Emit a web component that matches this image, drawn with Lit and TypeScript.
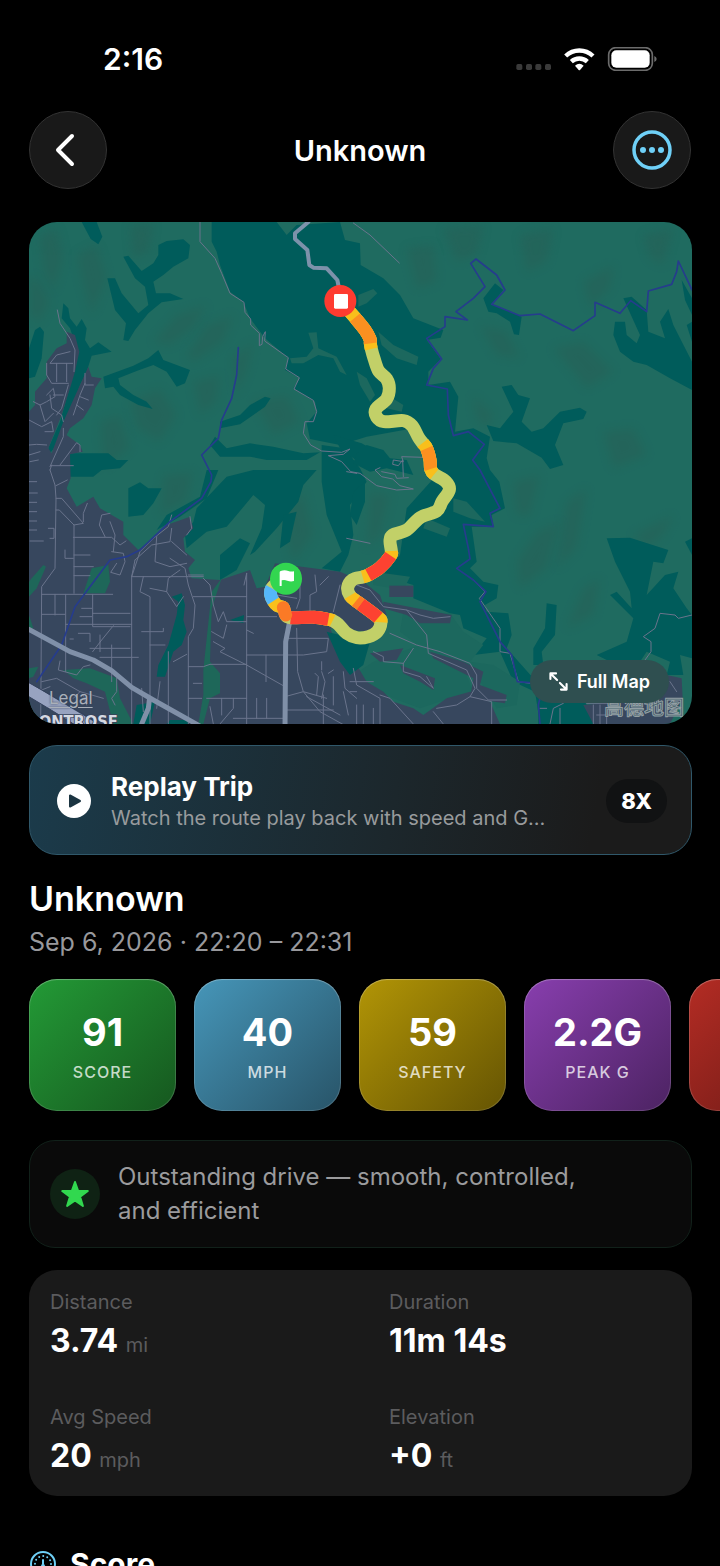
import { LitElement, html, svg, css } from "lit";
import { customElement, property } from "lit/decorators.js";

/* Terrain and street data share one drawing space, three units per point. */
const SHADE = [
  "M60 60 110 40 130 130 100 230 70 170Z",
  "M27 180 60 200 90 260 60 320 27 300Z",
  "M170 120 230 90 260 190 215 300 190 210Z",
  "M330 30 400 25 385 110 340 130Z",
  "M470 300 560 270 520 340 450 390 400 380Z",
  "M560 330 640 300 610 380 520 440 500 420Z",
  "M640 430 700 380 680 470 650 540Z",
  "M330 560 420 520 470 600 420 680 350 640Z",
  "M240 620 300 600 330 700 250 760Z",
  "M520 500 600 480 590 560 540 600Z",
  "M700 560 800 540 840 620 760 660Z",
  "M430 780 520 770 500 860 420 900Z",
  "M780 900 850 830 880 960 820 1040Z",
  "M1050 830 1110 840 1080 960 1040 1000Z",
  "M1270 40 1390 30 1370 120 1310 140Z",
  "M1160 100 1240 90 1250 200 1190 220Z",
  "M1500 60 1600 40 1580 140 1520 170Z",
  "M1690 200 1780 150 1770 220 1710 280Z",
  "M1870 60 1960 40 1930 150 1890 130Z",
  "M1380 330 1460 350 1500 430 1430 420Z",
  "M1600 400 1690 380 1780 470 1700 520Z",
  "M1750 650 1840 640 1880 720 1780 760Z",
  "M1360 540 1420 600 1400 640 1370 610Z",
  "M1550 950 1620 920 1580 1060 1500 1120 1490 1040Z",
  "M1640 860 1700 820 1670 1000 1610 1060Z",
  "M1840 960 1960 900 1930 960 1880 1000Z",
  "M1480 800 1560 780 1530 900 1490 900Z",
  "M1690 1120 1740 1090 1720 1200 1640 1240Z",
];

const FOREST = [
  "M575 21H770L800 60 830 30 960 21 975 75 1020 85 1022 150 1090 190 1140 240 1180 310 1270 345 1262 368 1220 375 1262 432 1225 470 1225 510 1290 500 1315 545 1305 650 1360 640 1410 665 1400 730 1410 765 1438 800 1455 880 1415 900 1420 935 1355 935 1370 1040 1350 1060 1390 1100 1435 1110 1430 1150 1395 1170 1400 1190 1465 1195 1475 1260 1460 1300 1500 1345 1540 1390 1640 1470 1700 1527H1560L1545 1430 1480 1400 1440 1310 1360 1320 1400 1270 1330 1240 1320 1200 1290 1195 1180 1150 1180 1110 1080 1080 1140 1020 1160 880 1250 780 1180 640 1040 665 960 690 870 672 860 625 890 590 885 560 820 520 840 490 795 465 805 430 735 370 690 310 670 260 630 230 600 150 590 110 575 80Z",
  "M185 21 230 21 247 65 235 88 212 72Z",
  "M415 90 440 78 490 73 510 90 505 130 460 155 430 180 400 200 408 235 450 235 490 252 425 262 385 295 345 345 325 378 310 375 318 325 285 285 262 190 285 190 305 235 355 295 385 270 375 215 345 190 310 125 325 122 365 168 400 145 415 120Z",
  "M45 345 60 335 72 350 65 430 45 485 27 490V400Z",
  "M130 265 145 280 150 310 170 335 185 312 200 340 195 375 210 400 235 382 275 410 215 422 200 470 180 510 160 570 110 690 90 715 85 700 120 620 140 550 162 470 170 400 150 340 125 310Z",
  "M250 485 340 452 385 430 415 405 430 435 510 465 495 505 470 515 440 470 400 450 350 468 295 490 300 510 340 540 380 560 398 582 355 570 300 540 280 515 255 520Z",
  "M600 620 660 600 690 570 735 545 752 550 735 575 700 600 660 628 600 640Z",
  "M570 690 585 665 620 700 690 685 760 695 850 715 900 712 860 735 740 735 690 725 600 725Z",
  "M150 715 265 715 290 735 325 735 300 760 245 765 220 785 150 785Z",
  "M325 820 360 802 385 820 425 820 400 865 370 900 325 905Z",
  "M560 765H595L560 850 480 905 410 945 440 900 540 845Z",
  "M620 785 700 765H890L850 810 835 860 770 940 705 1010 690 1020 725 940 735 870 700 840 650 900 620 935 560 950 500 1000 495 960 520 920 530 880Z",
  "M905 690 975 700 1020 760 1040 800 990 870 1000 960 985 1020 960 1070 905 1060 965 1010 920 900 905 800Z",
  "M600 1020 660 970 690 985 650 1065 600 1095Z",
  "M790 900 830 890 810 980 780 1000Z",
  "M940 660 1025 685 1070 710 1045 760 985 720 960 700Z",
  "M1010 715 1040 690 1090 705 1110 730 1160 735 1180 780 1100 760 1050 770 1000 745Z",
  "M1000 830 1035 800 1035 860 1010 930 990 900Z",
  "M1390 250 1425 205 1450 225 1415 268 1470 290 1505 305 1497 360 1482 358 1470 320 1430 295 1405 290Z",
  "M1810 250 1835 245 1880 285 1885 350 1935 370 1920 320 1945 282 1960 330 2016 440V525L1950 490 1880 450 1840 440 1800 410 1780 360 1785 320 1815 320 1820 360 1850 385 1860 360Z",
  "M1985 195 2016 250V300L1995 255Z",
  "M2000 330 2016 320V380Z",
  "M1445 515 1475 510 1495 540 1530 550 1505 620 1535 650 1570 640 1620 590 1680 578 1700 590 1690 612 1630 625 1605 690 1630 750 1590 762 1565 728 1490 685 1420 678 1400 630 1440 640 1480 590Z",
  "M1760 970 1830 968 1945 1005 1930 1045 1900 1040 1880 1140 1935 1080 1975 1070 1960 1120 2000 1180 2016 1200V1330L1980 1320 1990 1380 1940 1380 1950 1340 1880 1310 1860 1340 1780 1345 1730 1320 1820 1280 1840 1210 1770 1140 1790 1130 1835 1180 1830 1130 1785 1040Z",
  "M1580 1165 1610 1170 1605 1260 1565 1310 1570 1350 1540 1350 1540 1300 1575 1240Z",
  "M1555 1460 1690 1455 1740 1527H1555Z",
  "M2016 970 1995 980 2016 1020Z",
];

const MEADOW = [
  "M865 353 890 352 895 400 950 425 980 480 960 470 940 430 895 420 850 445 815 445 810 430 860 425 880 400Z",
  "M1015 240 1060 222 1072 235 1040 265 1015 275Z",
  "M1075 350 1120 390 1195 425 1190 450 1130 430 1085 390Z",
  "M1010 470 1040 490 1065 540 1050 560 1020 510Z",
  "M1110 545 1150 570 1145 590 1100 580Z",
  "M1300 850 1340 860 1395 920 1350 910 1300 890Z",
  "M1220 910 1290 940 1280 965 1210 940Z",
  "M1150 1190 1290 1195 1330 1250 1390 1290 1350 1340 1420 1350 1500 1400 1490 1470 1430 1480 1370 1380 1220 1310 1140 1250Z",
  "M1000 1380 1060 1340 1200 1290 1330 1360 1360 1430 1290 1450 1200 1480 1120 1450 1070 1420Z",
  "M1060 1070 1170 1085 1150 1125 1060 1110Z",
];

const CITY = [
  "M27 590 45 570 45 530 80 490 80 440 110 400 140 385 140 350 165 360 178 410 165 470 150 520 125 600 85 700 95 715 130 620 180 510 205 455 215 485 245 490 225 520 215 570 190 610 150 640 140 660 180 690 188 710 150 718 152 790 140 820 170 875 220 845 240 880 310 920 310 960 355 1005 400 970 440 930 510 905 520 940 490 970 495 1010 525 1035 505 1060 515 1090 600 1095 690 1065 710 1120 735 1115 765 1045 960 1070 1030 1100 1080 1140 1100 1200 1050 1250 930 1240 960 1310 990 1370 1010 1350 1040 1400 1090 1430 1120 1460 1180 1480 1210 1500 1280 1450 1350 1430 1410 1460 1440 1527H27Z",
  "M1108 1112H1180V1146H1108Z",
  "M1090 1160 1190 1180 1295 1200 1290 1225 1200 1225 1160 1200 1090 1180Z",
  "M1050 1315 1150 1300 1130 1335 1080 1340Z",
  "M1140 1350 1245 1390 1240 1425 1200 1400 1150 1375Z",
  "M1230 1310 1330 1340 1390 1370 1380 1410 1460 1440 1455 1465 1350 1450 1360 1390 1240 1330Z",
  "M1690 1470 1790 1460 1940 1380 1985 1390 1988 1450 1950 1527H1720Z",
];

const PARK = [
  "M35 1090 70 1050 78 1055 50 1120 27 1145V1100Z",
  "M215 1060 265 1050 270 1100 255 1135 190 1135Z",
  "M130 1365 210 1360 290 1390 300 1450 340 1527H280L255 1430 200 1405 160 1390Z",
  "M27 1360 55 1355 40 1385 27 1390Z",
  "M27 1200 40 1240H27Z",
  "M575 1130 605 1090 595 1120 575 1180 570 1340 600 1375 600 1435 570 1450 550 1527H535L550 1440 550 1365Z",
];

const LAKE = [
  "M455 1145 485 1135 495 1170 490 1215 500 1250 485 1290 460 1310 435 1385 410 1385 415 1350 445 1290 470 1200 475 1160Z",
  "M630 1215 672 1200 670 1225Z",
  "M350 1470 405 1460 390 1527H340Z",
  "M920 1250 1000 1270 1050 1280 1030 1350 990 1380 960 1340Z",
  "M450 1515 510 1515 505 1527H440Z",
];

const MINOR = [
  "M540 21 540 80 585 130 605 175 630 235 672 262 675 292 692 312 692 330 718 355 718 392 726 388 728 365 736 350 734 378 805 428 797 462 838 488 822 522 880 556 890 590 880 620 855 620 850 655 872 690 905 708 965 712 990 702 970 718 925 722 965 740 992 770 1020 775 1070 812 1130 825 1180 822 1140 812 1118 792 1085 785 1065 765 1080 758",
  "M1210 727 1145 725 1150 740 1120 735 1118 748 1135 752 1148 735 1150 785",
  "M1085 770 1125 778 1130 790 1165 788",
  "M1000 24 1050 60 1138 144",
  "M112 285 120 325 150 370 165 405 162 470",
  "M150 410 110 420 90 445H158M80 445V480L95 505H145M110 445V500M140 445V500M145 510 125 580 110 600M80 540 100 520 105 545 80 560 60 570 40 560M60 570 75 620 100 595M100 540H130M90 540 95 580 125 600 130 620M27 615 65 635 95 620 100 650 75 650",
  "M195 475 195 510 220 510M195 505 180 540 160 600M180 545 205 555M170 570 190 585",
  "M27 690 50 688 80 690M27 720 60 710M30 740 55 735M90 755 130 665 130 640M95 750 90 765M120 750 170 683 180 690 180 710M95 752H160",
  "M90 765 105 810 108 850 105 1060 65 1115 62 1527",
  "M108 850 125 850 190 925 162 930 118 885 108 885M190 920 190 895 202 865M162 930V1135M108 812 142 795",
  "M27 800H50M27 834H52M27 862H50M27 890H50M27 918H50M27 945H50M30 978H70M85 940H102V970H90M135 1005V1030H160M160 967H275L300 990 318 978M162 1020H210M162 1055H220M162 1082H210M270 895 245 900 238 930 255 965M270 920 285 960 280 1010",
  "M275 1010 310 1015 315 1040 300 1080 272 1072 290 1045",
  "M65 1138H278M65 1198H135M137 1138V1370M105 1138V1200M218 1138V1235H330M218 1195H330M137 1228H335M150 1272H160M218 1310 245 1275 280 1232",
  "M210 1300H330M240 1327H355M275 1290V1400M185 1180H215M180 1205H215M175 1255H210V1280M240 1260V1310",
  "M335 1527V1085L360 1010 400 970 445 935 455 900",
  "M345 1035 395 990 450 980 455 940M410 965 405 1040 450 1055 500 1045M450 1030 495 1060 505 1110 525 1170 520 1240 505 1265V1527",
  "M335 1085H505 550M370 1085 360 1130 390 1145V1527M480 1065 445 1090 440 1130 470 1175 490 1145M345 1035 335 1085M455 980 500 1020M510 905 515 940 500 960",
  "M390 1120 440 1130M365 1250H430V1240M390 1290H435M505 1080H550M520 1145H680M365 1420 370 1490M420 1400 410 1480M445 1310V1527M460 1340 500 1318M505 1355H550L570 1348H680",
  "M680 1075V1527M680 1075 672 1110M550 1090 570 1110 580 1170 595 1220 610 1190 620 1220H680M575 1250 610 1270 620 1230M580 1280 615 1300 600 1310 680 1350",
  "M680 1205H770M680 1245 700 1255M680 1320H795M738 1320V1400M680 1350 795 1415M830 1240 833 1370 850 1430 900 1490 990 1540",
  "M795 1320H850L920 1310 925 1270 900 1270H795M885 1375 895 1385 890 1440M905 1370 915 1400 905 1450M905 1340V1365M925 1375 940 1365M795 1485H940M795 1445 850 1430 920 1450M970 1430 985 1500",
  "M910 1440V1527M940 1385V1470M860 1445 960 1500M970 1370 975 1420 1010 1450M505 1450H545M560 1450H680M520 1405H545M605 1450V1500M570 1475 580 1527M600 1527 640 1480V1450M640 1510H795M710 1510V1450M740 1450V1510",
  "M120 1338 115 1365 170 1380 190 1355 210 1350M65 1400 110 1390 180 1430 160 1450M65 1425 90 1415M290 1390 290 1430 275 1450 285 1470M180 1430 250 1450M190 1440 200 1470",
  "M840 1080V1150L830 1180M885 1080 890 1130 870 1140 870 1190M925 1085 900 1110M960 1110 940 1190M770 1140 830 1150",
  "M1010 1110 1050 1125 1090 1175 1160 1185 1220 1260 1225 1315 1340 1365 1365 1420 1350 1445 1415 1460 1415 1527",
  "M1110 1255 1190 1290 1260 1310 1350 1345 1370 1380 1370 1420 1405 1455H1460M1160 1185 1200 1200 1240 1210 1290 1205",
  "M1060 1310 1090 1325 1090 1340 1150 1345 1180 1300M1150 1345 1150 1370 1200 1385 1240 1420 1220 1385",
  "M1360 1095 1395 1130 1378 1150 1440 1240 1440 1310 1470 1315 1495 1400 1530 1405",
  "M2016 1200 1975 1210 1965 1200 1920 1195 1905 1240 1870 1265 1893 1280V1310L1875 1335",
  "M1000 1360 1010 1410 1080 1450 1080 1527M1080 1440 1110 1450 1180 1527M990 1400 1060 1400M990 1430 1010 1430M1030 1470V1527M1010 1470V1527M1060 1480V1527M1240 1490 1270 1527M1250 1480 1310 1470 1350 1445M980 970 1050 985M980 770 1010 775",
  "M1560 1480 1580 1480M1590 1527 1600 1480 1630 1465M1620 1480V1527M1720 1470V1527M1740 1470V1527M1700 1465H1780M1950 1400 1970 1430M1760 1490V1527M1730 1500H1790",
];

const RIVER = [
  "M655 398 650 480 635 550 605 615 595 670 545 720 575 780 573 800 545 850 450 920 360 1005 320 1025 270 1035 165 1175 125 1290 50 1400",
  "M2016 225 1975 138 1970 170 1955 208 1885 228 1880 290 1832 257 1800 295 1725 262V302L1660 347 1560 297 1500 302 1415 268 1455 225 1430 180 1368 132 1352 145 1395 215 1360 250 1308 290 1342 315 1275 305V335L1220 370 1265 432 1240 460 1220 510 1282 522 1285 600 1300 662 1345 650 1393 688 1358 735 1380 765 1440 880 1410 895 1420 935 1330 928 1345 1000 1350 1032 1310 1060 1360 1095 1398 1130 1380 1160 1440 1280 1475 1320 1492 1400 1555 1405 1565 1430 1555 1470 1560 1527",
];

const MAJOR = [
  "M865 21 825 55 825 72 862 105 868 150 880 158 920 160 952 195 955 210",
];

const FREEWAY = [
  "M27 1243 150 1310 220 1335 275 1367 335 1417 400 1455 520 1522 560 1545",
  "M808 1225 797 1280 795 1540",
  "M388 1455 385 1480 365 1527",
];

/* Recorded positions of the drive, from its end back to its start. */
const TRACK: [number, number][] = [
  [961, 258], [985, 285], [1005, 308], [1035, 345], [1050, 372],
  [1051, 385], [1054, 402], [1062, 430], [1076, 468], [1100, 492],
  [1108, 520], [1100, 552], [1068, 582], [1070, 606], [1092, 620],
  [1150, 617], [1176, 632], [1196, 668], [1208, 684], [1220, 700],
  [1230, 735], [1232, 762], [1243, 778], [1278, 800], [1288, 825],
  [1266, 860], [1250, 888], [1200, 908], [1160, 945], [1118, 960],
  [1110, 978], [1114, 1008], [1112, 1022], [1080, 1058], [1045, 1080],
  [1028, 1086], [998, 1094], [983, 1118], [990, 1142], [1008, 1158],
  [1022, 1168], [1075, 1208], [1083, 1222], [1072, 1250], [1045, 1265],
  [1010, 1268], [980, 1255], [955, 1228], [938, 1217], [925, 1213],
  [880, 1207], [812, 1208], [797, 1200], [790, 1178], [772, 1172],
  [760, 1158], [752, 1140], [755, 1120], [775, 1100],
];

const SPANS: { from: number; to: number; tone: string }[] = [
  { from: 1, to: 6, tone: "gold" },
  { from: 2, to: 5, tone: "orange" },
  { from: 18, to: 22, tone: "gold" },
  { from: 19, to: 21, tone: "orange" },
  { from: 31, to: 35, tone: "gold" },
  { from: 32, to: 34, tone: "red" },
  { from: 38, to: 42, tone: "gold" },
  { from: 39, to: 40, tone: "deep" },
  { from: 40, to: 41, tone: "red" },
  { from: 48, to: 50, tone: "gold" },
  { from: 49, to: 51, tone: "red" },
  { from: 53, to: 55, tone: "gold" },
  { from: 55, to: 57, tone: "blue" },
];

function curve(from: number, to: number): string {
  const at = (i: number) => TRACK[Math.max(0, Math.min(TRACK.length - 1, i))];
  let d = `M${at(from).join(" ")}`;
  for (let i = from; i < to; i++) {
    const [a, b, c, e] = [at(i - 1), at(i), at(i + 1), at(i + 2)];
    const first = [b[0] + (c[0] - a[0]) / 6, b[1] + (c[1] - a[1]) / 6];
    const second = [c[0] - (e[0] - b[0]) / 6, c[1] - (e[1] - b[1]) / 6];
    d += `C${first.join(" ")} ${second.join(" ")} ${c.join(" ")}`;
  }
  return d;
}

@customElement("trip-map")
class TripMap extends LitElement {
  static styles = css`
    :host {
      display: block;
      position: relative;
      overflow: hidden;
      aspect-ratio: 663 / 502;
      border-radius: 28px;
      background: #1f6b60;
    }
    .canvas {
      display: block;
      width: 100%;
      height: 100%;
    }
    .shade { fill: #2a5c53; opacity: 0.4; filter: blur(14px); }
    .forest { fill: #005c5b; }
    .meadow { fill: #1c685e; }
    .city { fill: #37475e; }
    .park { fill: #1e6759; }
    .line { fill: none; stroke-linejoin: round; stroke-linecap: round; }
    .minor { stroke: #6a748c; stroke-width: 3; }
    .river { stroke: #263c8d; stroke-width: 5; }
    .major { stroke: #7d92ab; stroke-width: 12; }
    .freeway { stroke: #8090a8; stroke-width: 15; }
    .interstate { stroke: #98a3c0; stroke-width: 36; }
    .casing { stroke: #34415c; stroke-width: 3; }
    .route { stroke: #c2d068; stroke-width: 39; }
    .seg { stroke-linecap: butt; }
    .gold { stroke: #f9bf1b; }
    .orange { stroke: #fb9020; }
    .deep { stroke: #fb7a26; }
    .red { stroke: #fd4231; }
    .blue { stroke: #55b7fa; }
    .town {
      font: 700 49px "Liberation Sans Narrow", "DejaVu Sans Condensed", sans-serif;
      fill: #d5d9e2;
      stroke: #37435a;
      stroke-width: 5;
      paint-order: stroke;
    }
    .legal {
      position: absolute;
      left: 20px;
      bottom: 16px;
      font-size: 17px;
      line-height: 20px;
      color: #a9b0ba;
      text-shadow: 0 0 2px #37435a;
      text-underline-offset: 3px;
    }
    .mark {
      position: absolute;
      right: 8px;
      bottom: 5px;
      font: 500 20px/24px "Noto Sans CJK SC", sans-serif;
      color: #3c5560;
      -webkit-text-stroke: 1px #93a0a5;
    }
    .full {
      position: absolute;
      right: 23px;
      bottom: 21px;
      display: flex;
      align-items: center;
      gap: 9px;
      height: 43px;
      padding: 0 19px;
      border: 0;
      border-radius: 22px;
      background: #2f4f50;
      color: #fff;
      font: 600 18px/24px Inter, sans-serif;
    }
    .arrows { width: 19px; height: 19px; }
  `;

  private lines(kind: string, list: string[]) {
    return list.map((d) => svg`<path class="line ${kind}" d=${d} />`);
  }

  private areas(kind: string, list: string[]) {
    return list.map((d) => svg`<path class=${kind} d=${d} />`);
  }

  render() {
    return html`
      <svg class="canvas" viewBox="27 21 1989 1506" preserveAspectRatio="xMidYMid slice" role="img" aria-label="Trip route">
        ${this.areas("shade", SHADE)}
        ${this.areas("forest", FOREST)}
        ${this.areas("meadow", MEADOW)}
        ${this.areas("city", CITY)}
        ${this.areas("park", PARK)}
        ${this.areas("forest", LAKE)}
        ${this.lines("minor", MINOR)}
        ${this.lines("river", RIVER)}
        ${this.lines("major", MAJOR)}
        ${this.lines("freeway", FREEWAY)}
        <path class="line interstate" d="M0 1408 100 1468 230 1546" />
        <path class="line casing" d="M0 1388 110 1450 250 1532M0 1429 100 1489 180 1540" />
        <text class="town" x="56" y="1536">ONTROSE</text>

        <path class="line route" d=${curve(0, TRACK.length - 1)} />
        ${SPANS.map((s) => svg`<path class="line route seg ${s.tone}" d=${curve(s.from, s.to)} />`)}
        <path class="line route deep" d=${curve(52, 53)} />

        <circle cx="961" cy="258" r="48" fill="#fe3b30" />
        <rect x="942" y="237" width="42" height="44" rx="4" fill="#fff" />
        <circle cx="798" cy="1091" r="48" fill="#32d650" />
        <path fill="#fff" d="M779 1072q0-3 3-4 12-5 23 0 8 3 17 1v29q-10 3-20-1-8-3-17-1v17h-6z" />
      </svg>
      <a class="legal" href="#legal">Legal</a>
      <span class="mark" lang="zh">高德地图</span>
      <button class="full" type="button">
        <svg class="arrows" viewBox="0 0 54 54" fill="none" stroke="#fff" stroke-width="6" stroke-linecap="round" stroke-linejoin="round" aria-hidden="true">
          <path d="M4 20V4h16M5 5l18 18M50 34v16H34M49 49 31 31" />
        </svg>
        Full Map
      </button>
    `;
  }
}

@customElement("metric-tile")
class MetricTile extends LitElement {
  @property() value = "";
  @property() label = "";
  @property({ reflect: true }) tone = "";

  static styles = css`
    :host {
      box-sizing: border-box;
      flex: 0 0 147px;
      height: 132px;
      display: flex;
      flex-direction: column;
      align-items: center;
      justify-content: center;
      gap: 7px;
      border-radius: 28px;
      box-shadow: inset 0 0 0 1px #ffffff26, inset 0 1px 1px #ffffff30;
      color: #fff;
    }
    :host([tone="green"]) { background: linear-gradient(135deg, #239a36, #16571f); }
    :host([tone="blue"]) { background: linear-gradient(135deg, #4696b9, #285468); }
    :host([tone="yellow"]) { background: linear-gradient(135deg, #b29506, #655403); }
    :host([tone="purple"]) { background: linear-gradient(135deg, #883eae, #4c2362); }
    :host([tone="red"]) { background: linear-gradient(135deg, #b42c24, #651814); }
    .value { font-size: 38px; line-height: 46px; font-weight: 700; }
    .label {
      font-size: 16px;
      line-height: 20px;
      font-weight: 500;
      letter-spacing: 1px;
      color: #ffffffbf;
    }
  `;

  render() {
    return html`<span class="value">${this.value}</span><span class="label">${this.label}</span>`;
  }
}

@customElement("app-root")
class AppRoot extends LitElement {
  static styles = css`
    :host {
      display: block;
      box-sizing: border-box;
      height: 100vh;
      overflow: hidden auto;
      scrollbar-width: none;
      background: #000;
      color: #fff;
      font-family: Inter, sans-serif;
    }
    h1, h2, p, dl, dd { margin: 0; }
    .status {
      display: flex;
      align-items: center;
      justify-content: space-between;
      height: 36px;
      padding: 41px 63px 0 103px;
      font-size: 30px;
      line-height: 36px;
      font-weight: 600;
    }
    .signals { display: block; width: 141px; height: 24px; }
    .bar {
      display: grid;
      grid-template-columns: 78px 1fr 78px;
      align-items: center;
      padding: 34px 29px 33px;
      text-align: center;
    }
    .bar-title { padding-top: 2px; font-size: 29px; line-height: 36px; font-weight: 600; }
    .round {
      display: grid;
      place-items: center;
      width: 78px;
      height: 78px;
      padding: 0;
      border: 1px solid #333;
      border-radius: 50%;
      background: #191919;
    }
    .chevron { width: 24px; height: 36px; margin-right: 6px; }
    .more { width: 40px; height: 40px; }
    .content {
      display: flex;
      flex-direction: column;
      padding: 0 28px 0 29px;
    }
    .replay {
      display: flex;
      align-items: center;
      gap: 20px;
      height: 110px;
      margin-top: 21px;
      padding: 2px 24px 0 27px;
      border: 1px solid #30586a;
      border-radius: 28px;
      background: linear-gradient(100deg, #1b3b4b, #1c272c 55%, #1b1b1b 85%);
      color: #fff;
      font-family: inherit;
      text-align: left;
    }
    .play { flex: none; width: 34px; height: 34px; }
    .replay-text { flex: 1; min-width: 0; display: flex; flex-direction: column; }
    .replay-title { font-size: 26px; line-height: 34px; font-weight: 700; }
    .replay-sub { font-size: 20px; line-height: 28px; color: #989b9d; white-space: nowrap; }
    .rate {
      padding: 8px 15px;
      border-radius: 22px;
      background: #111213;
      font-size: 22px;
      line-height: 28px;
      font-weight: 800;
    }
    .place { margin-top: 22px; font-size: 34px; line-height: 44px; font-weight: 600; }
    .when { margin-top: 5px; font-size: 25px; line-height: 32px; color: #98989c; }
    .tiles { display: flex; gap: 18px; margin: 21px -28px 0 0; overflow: hidden; }
    .note {
      display: flex;
      align-items: center;
      gap: 18px;
      margin-top: 29px;
      padding: 19px 100px 19px 20px;
      border: 1px solid #11211a;
      border-radius: 26px;
      background: #0a0a0a;
      color: #9b9b9d;
      font-size: 24px;
      line-height: 34px;
    }
    .badge { flex: none; width: 50px; height: 50px; }
    .facts {
      display: grid;
      grid-template-columns: 1fr 1fr;
      gap: 41px 57px;
      margin-top: 22px;
      padding: 18px 21px 19px;
      border-radius: 28px;
      background: #1a1a1a;
    }
    .fact-name { font-size: 20px; line-height: 28px; color: #5c5c5e; }
    .fact-value { margin-top: 4px; font-size: 32px; line-height: 42px; font-weight: 700; }
    .unit { font-size: 20px; line-height: 20px; font-weight: 400; color: #5c5c5e; }
    .score {
      display: flex;
      align-items: center;
      gap: 13px;
      margin-top: 46px;
      padding-bottom: 40px;
      font-size: 30px;
      line-height: 44px;
      font-weight: 700;
    }
    .gauge { width: 28px; height: 28px; }
  `;

  private tiles = [
    { value: "91", label: "SCORE", tone: "green" },
    { value: "40", label: "MPH", tone: "blue" },
    { value: "59", label: "SAFETY", tone: "yellow" },
    { value: "2.2G", label: "PEAK G", tone: "purple" },
    { value: "", label: "", tone: "red" },
  ];

  private facts = [
    { name: "Distance", value: "3.74", unit: "mi" },
    { name: "Duration", value: "11m 14s", unit: "" },
    { name: "Avg Speed", value: "20", unit: "mph" },
    { name: "Elevation", value: "+0", unit: "ft" },
  ];

  render() {
    return html`
      <div class="status">
        <span>2:16</span>
        <svg class="signals" viewBox="50 48 423 72" aria-hidden="true">
          <g fill="#3a3a3a">
            <rect x="51" y="99" width="18" height="18" rx="5" />
            <rect x="80" y="99" width="18" height="18" rx="5" />
            <rect x="108" y="99" width="18" height="18" rx="5" />
            <rect x="137" y="99" width="18" height="18" rx="5" />
          </g>
          <g fill="none" stroke="#fff" stroke-width="13">
            <path d="M199 75a59 59 0 0 1 82 0" />
            <path d="M216 92a35 35 0 0 1 48 0" />
          </g>
          <path fill="#fff" d="M227 104q13-12 26 0l-11 13q-2 2-4 0z" />
          <rect x="328" y="50" width="131" height="68" rx="21" fill="none" stroke="#6c6c6c" stroke-width="5" />
          <rect x="336" y="58" width="115" height="52" rx="15" fill="#fff" />
          <path fill="#6c6c6c" d="M465 75q7 3 7 9t-7 9z" />
        </svg>
      </div>

      <header class="bar">
        <button class="round" type="button" aria-label="Back">
          <svg class="chevron" viewBox="0 0 24 36" fill="none" stroke="#fff" stroke-width="4" stroke-linecap="round" stroke-linejoin="round">
            <path d="M19 4 5 18l14 14" />
          </svg>
        </button>
        <div class="bar-title">Unknown</div>
        <button class="round" type="button" aria-label="More">
          <svg class="more" viewBox="0 0 40 40" fill="#6fd0f7">
            <circle cx="20" cy="20" r="18" fill="none" stroke="#6fd0f7" stroke-width="3.500" />
            <circle cx="11" cy="20" r="3" /><circle cx="20" cy="20" r="3" /><circle cx="29" cy="20" r="3" />
          </svg>
        </button>
      </header>

      <main class="content">
        <trip-map></trip-map>

        <button class="replay" type="button">
          <svg class="play" viewBox="0 0 34 34" aria-hidden="true">
            <circle cx="17" cy="17" r="17" fill="#fff" />
            <path d="M13 11.500v11l10-5.500z" fill="#1b3441" stroke="#1b3441" stroke-width="2" stroke-linejoin="round" />
          </svg>
          <span class="replay-text">
            <span class="replay-title">Replay Trip</span>
            <span class="replay-sub">Watch the route play back with speed and G…</span>
          </span>
          <span class="rate">8X</span>
        </button>

        <h1 class="place">Unknown</h1>
        <p class="when">Sep 6, 2026 · 22:20 – 22:31</p>

        <div class="tiles">
          ${this.tiles.map((t) => html`<metric-tile .value=${t.value} .label=${t.label} tone=${t.tone}></metric-tile>`)}
        </div>

        <section class="note">
          <svg class="badge" viewBox="0 0 50 50" aria-hidden="true">
            <circle cx="25" cy="25" r="25" fill="#0f2214" />
            <path fill="#31d84f" stroke="#31d84f" stroke-width="2" stroke-linejoin="round" d="M25 13l3.200 9h9.600l-7.700 5.800 2.800 9.200-7.900-5.600-7.900 5.600 2.800-9.200-7.700-5.800h9.600z" />
          </svg>
          <p>Outstanding drive — smooth, controlled, and efficient</p>
        </section>

        <dl class="facts">
          ${this.facts.map(
            (f) => html`<div>
              <dt class="fact-name">${f.name}</dt>
              <dd class="fact-value">${f.value} ${f.unit ? html`<span class="unit">${f.unit}</span>` : ""}</dd>
            </div>`
          )}
        </dl>

        <h2 class="score">
          <svg class="gauge" viewBox="0 0 28 28" fill="none" stroke="#6fd0f7" aria-hidden="true">
            <circle cx="14" cy="14" r="12" stroke-width="2" />
            <circle cx="14" cy="14" r="8" stroke-width="2" stroke-linecap="round" stroke-dasharray="0 4.190" />
            <path d="M14 10v4" stroke-width="2" stroke-linecap="round" />
            <circle cx="14" cy="16" r="2" fill="#6fd0f7" stroke="none" />
          </svg>
          Score
        </h2>
      </main>
    `;
  }
}
